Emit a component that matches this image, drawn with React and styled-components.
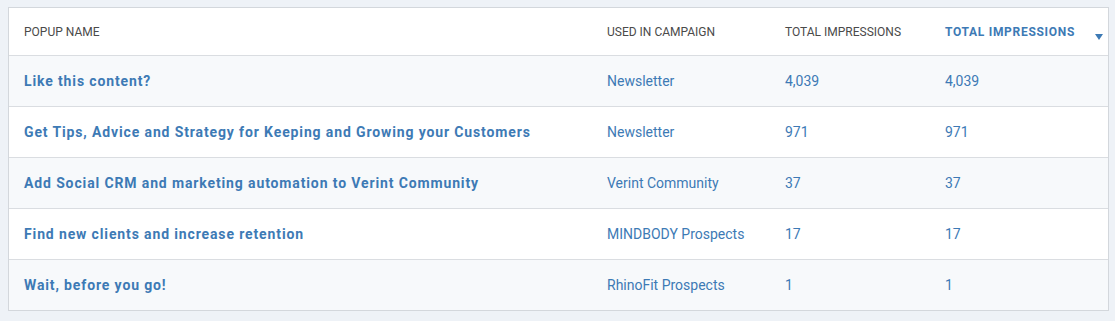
import styled, { createGlobalStyle } from "styled-components";

const GlobalStyle = createGlobalStyle`
  html, body {
    background: #eef2f7;
  }
  body {
    margin: 7px 6px 0 8px;
    font-family: Roboto, "Liberation Sans", Arial, sans-serif;
  }
`;

const Panel = styled.div`
  background: #fff;
  border: 1px solid #d3d7dc;
`;

const Row = styled.div`
  display: grid;
  grid-template-columns: 583px 178px 160px 1fr;
  align-items: center;
  padding-left: 15px;
  height: ${(p) => (p.$head ? "47px" : "50px")};
  background: ${(p) => (p.$shaded ? "#f7f9fb" : "#fff")};
  border-bottom: 1px solid #dadde1;
  &:last-child {
    border-bottom: none;
  }
`;

const HeadCell = styled.div`
  position: relative;
  font-size: 12px;
  text-transform: uppercase;
  color: ${(p) => (p.$active ? "#3d7ab5" : "#4a4a4a")};
  font-weight: ${(p) => (p.$active ? 700 : 400)};
  letter-spacing: ${(p) => (p.$active ? "0.7px" : "0")};
`;

const SortArrow = styled.span`
  position: absolute;
  right: 5px;
  top: 9px;
  width: 0;
  height: 0;
  border-left: 4px solid transparent;
  border-right: 4px solid transparent;
  border-top: 6px solid #3d7ab5;
`;

const Cell = styled.div`
  font-size: 14px;
  color: #3d7ab5;
  font-weight: ${(p) => (p.$bold ? 700 : 400)};
  letter-spacing: ${(p) => (p.$bold ? "0.87px" : "0")};
`;

const rows = [
  { name: "Like this content?", campaign: "Newsletter", total: "4,039" },
  {
    name: "Get Tips, Advice and Strategy for Keeping and Growing your Customers",
    campaign: "Newsletter",
    total: "971",
  },
  {
    name: "Add Social CRM and marketing automation to Verint Community",
    campaign: "Verint Community",
    total: "37",
  },
  {
    name: "Find new clients and increase retention",
    campaign: "MINDBODY Prospects",
    total: "17",
  },
  { name: "Wait, before you go!", campaign: "RhinoFit Prospects", total: "1" },
];

export default function App() {
  return (
    <>
      <GlobalStyle />
      <Panel>
        <Row $head>
          <HeadCell>Popup Name</HeadCell>
          <HeadCell>Used in Campaign</HeadCell>
          <HeadCell>Total Impressions</HeadCell>
          <HeadCell $active>
            Total Impressions
            <SortArrow />
          </HeadCell>
        </Row>
        {rows.map((r, i) => (
          <Row key={r.name} $shaded={i % 2 === 0}>
            <Cell $bold>{r.name}</Cell>
            <Cell>{r.campaign}</Cell>
            <Cell>{r.total}</Cell>
            <Cell>{r.total}</Cell>
          </Row>
        ))}
      </Panel>
    </>
  );
}
